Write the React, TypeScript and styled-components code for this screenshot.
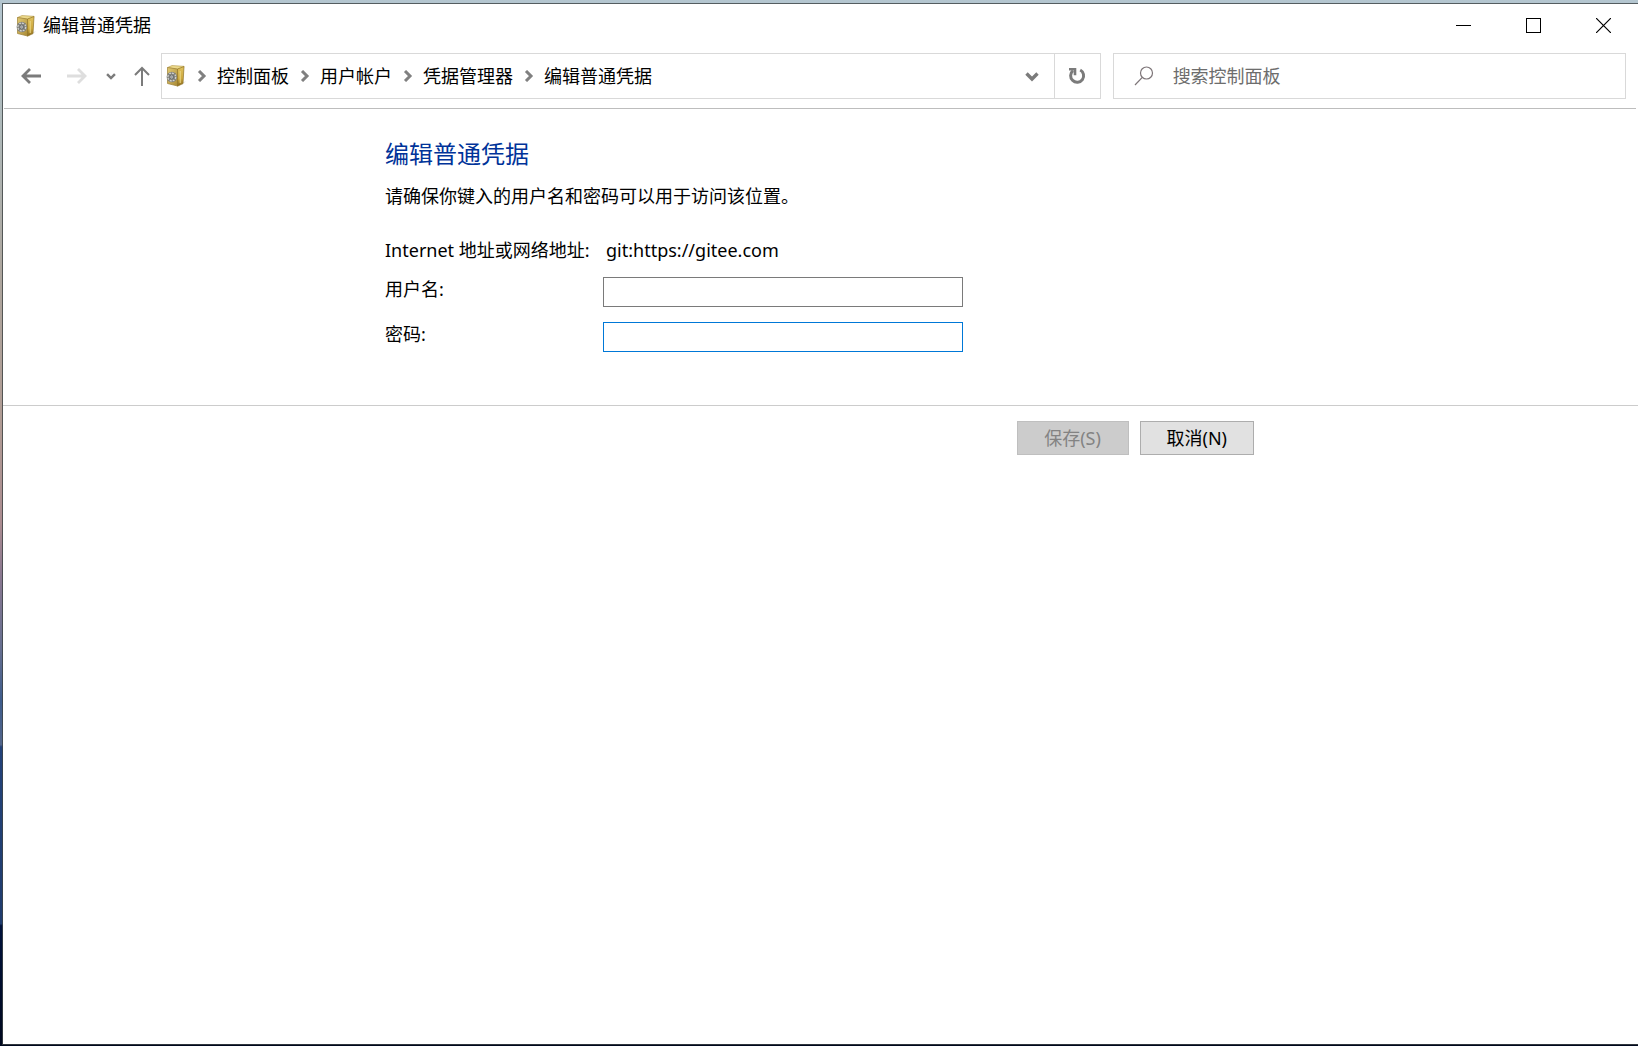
import React, { useState } from "react";
import styled, { createGlobalStyle } from "styled-components";

const GlobalStyle = createGlobalStyle`
  * {
    box-sizing: border-box;
  }
  html, body {
    margin: 0;
  }
  body, button, input {
    font-family: "Noto Sans", "Noto Sans CJK SC", sans-serif;
    font-size: 18px;
    line-height: 26px;
    color: #000;
  }
`;

const Desktop = styled.div`
  display: flex;
  min-height: 100vh;
  padding: 3px 0 1px 2px;
  background: linear-gradient(
    #b4c6d0 0%,
    #aeb9ba 12%,
    #ada69e 26%,
    #b09c94 40%,
    #ab8c90 50%,
    #8a7890 55%,
    #666f90 62%,
    #3e5c8c 67%,
    #52658a 71.2%,
    #23427a 71.4%,
    #1f3c6e 88.3%,
    #00123c 88.5%,
    #00081e 100%
  );
`;

const Window = styled.div`
  flex: 1;
  min-width: 0;
  display: flex;
  flex-direction: column;
  background: #fff;
  background-clip: padding-box;
  border: solid rgba(60, 66, 68, 0.8);
  border-width: 1px 0 1px 1px;
`;

const TitleBar = styled.header`
  display: flex;
  align-items: center;
  height: 43px;
  padding-left: 13px;
`;

const Title = styled.span`
  flex: 1;
  margin-left: 7px;
  line-height: 24px;
  padding-bottom: 2px;
`;

const PlainButton = styled.button<{ $width: number }>`
  display: flex;
  align-items: center;
  justify-content: center;
  flex: none;
  width: ${(p) => p.$width}px;
  align-self: stretch;
  padding: 0;
  border: 0;
  background: transparent;
  color: #7b7b7b;
`;

const CaptionButton = styled(PlainButton)`
  color: #000;
`;

const NavBar = styled.nav`
  display: flex;
  height: 62px;
  margin: 0 2px 0 1px;
  padding: 6px 10px 9px 4px;
  border-bottom: 1px solid #bdbdbd;
`;

const AddressBar = styled.div`
  flex: 19 1 0;
  min-width: 0;
  display: flex;
  align-items: center;
  padding-left: 4px;
  border: 1px solid #d9d9d9;
`;

const Crumbs = styled.ol`
  flex: 1;
  display: flex;
  align-items: center;
  margin: 0;
  padding: 0;
  list-style: none;
  white-space: nowrap;
`;

const Crumb = styled.li`
  display: flex;
  align-items: center;
`;

const CrumbLink = styled.a`
  color: #000;
  text-decoration: none;
`;

const Separator = styled.span`
  display: flex;
  justify-content: center;
  width: 31px;
`;

const RefreshButton = styled(PlainButton)`
  border-left: 1px solid #d9d9d9;
`;

const SearchBox = styled.label`
  flex: 10 1 0;
  min-width: 0;
  display: flex;
  align-items: center;
  gap: 19px;
  margin-left: 12px;
  padding-left: 20px;
  border: 1px solid #d9d9d9;
`;

const SearchInput = styled.input`
  flex: 1;
  min-width: 0;
  padding: 0;
  border: 0;
  outline: 0;
  background: transparent;
  &::placeholder {
    color: #6d6d6d;
    opacity: 1;
  }
`;

const Column = styled.div`
  width: 100%;
  max-width: 869px;
  margin: 0 auto;
`;

const Section = styled.div`
  padding: 29px 2px 53px 0;
`;

const Heading = styled.h1`
  margin: 0;
  font-size: 24px;
  line-height: 32px;
  font-weight: 400;
  color: #003399;
`;

const Hint = styled.p`
  margin: 13px 0 29px;
`;

const Fields = styled.div`
  display: grid;
  grid-template-columns: 218px 360px;
  row-gap: 15px;
  line-height: 24px;
`;

const FieldLabel = styled.label`
  white-space: nowrap;
`;

const Target = styled.output`
  padding-left: 3px;
`;

const TextField = styled.input`
  height: 30px;
  padding: 0 4px;
  border: 1px solid #7a7a7a;
  border-radius: 0;
  outline: 0;
  background: #fff;
  &[type="password"] {
    border-color: #0078d7;
  }
`;

const Footer = styled.footer`
  padding: 15px 2px 15px 0;
  border-top: 1px solid #cccccc;
`;

const Actions = styled(Column)`
  display: flex;
  justify-content: flex-end;
  gap: 11px;
`;

const ActionButton = styled.button`
  height: 34px;
  min-width: 112px;
  padding: 0 26px;
  border: 1px solid #adadad;
  background: #e1e1e1;
  line-height: 30px;
  white-space: nowrap;
  &:disabled {
    border-color: #bfbfbf;
    background: #cccccc;
    color: #838383;
  }
`;

const SafeIcon = () => (
  <svg width="20" height="22" viewBox="0 0 20 22" aria-hidden="true">
    <defs>
      <linearGradient id="safeFront" x1="0" y1="0" x2="1" y2="1">
        <stop offset="0" stopColor="#e2ca74" />
        <stop offset="1" stopColor="#a98a35" />
      </linearGradient>
      <linearGradient id="safeSide" x1="0" y1="0" x2="0" y2="1">
        <stop offset="0" stopColor="#e0c25e" />
        <stop offset="0.6" stopColor="#cda93f" />
        <stop offset="1" stopColor="#8a6a1c" />
      </linearGradient>
    </defs>
    <path d="M16 18l4-2-4 4z" fill="#ddd" />
    <path d="M1.500 2.500L6 .5l12 .8-.5 1.700-6 1.500z" fill="#ecd98c" stroke="#a88a34" strokeWidth=".5" />
    <path d="M1.500 2.500L11.500 4v17L1.500 18.500z" fill="url(#safeFront)" stroke="#9c8034" strokeWidth=".7" />
    <path d="M11.500 4L18 1.500 17 18.500l-5.500 2.700z" fill="url(#safeSide)" stroke="#8f7226" strokeWidth=".7" />
    <path d="M14.200 6v12" stroke="#ecd98a" strokeWidth="1" />
    <circle cx="5.800" cy="12" r="5.200" fill="#85857f" />
    <circle cx="5.800" cy="12" r="3.900" fill="none" stroke="#d2d2ce" strokeWidth="1.200" strokeDasharray="2 1" />
    <circle cx="5.800" cy="12" r="1.900" fill="#ecece9" stroke="#5c5f62" strokeWidth=".8" />
    <path d="M2.300 8.500l7 7M9.300 8.500l-7 7" stroke="#62666a" strokeWidth=".6" />
  </svg>
);

const BackIcon = () => (
  <svg width="20" height="16" viewBox="0 0 20 16" fill="none" stroke="currentColor" strokeWidth="2.800">
    <path d="M20 8H2M9 1L2 8l7 7" />
  </svg>
);

const ForwardIcon = () => (
  <svg width="20" height="16" viewBox="0 0 20 16" fill="none" stroke="#dedede" strokeWidth="2.800">
    <path d="M0 8h18M11 1l7 7-7 7" />
  </svg>
);

const UpIcon = () => (
  <svg width="16" height="20" viewBox="0 0 16 20" fill="none" stroke="currentColor" strokeWidth="2">
    <path d="M8 20V2M1 9l7-7 7 7" />
  </svg>
);

const DownIcon = ({ size }: { size: number }) => (
  <svg width={size} height={size} viewBox="0 0 14 14" fill="none" stroke="currentColor" strokeWidth="3.400">
    <path d="M1.500 4.500L7 10l5.500-5.500" />
  </svg>
);

const CrumbIcon = () => (
  <svg width="10" height="12" viewBox="0 0 10 12" fill="none" stroke="#808080" strokeWidth="3">
    <path d="M2 1l5 5-5 5" />
  </svg>
);

const RefreshIcon = () => (
  <svg width="18" height="18" viewBox="0 0 18 18" fill="none" stroke="currentColor" strokeWidth="3">
    <path d="M12.200 3A6.500 6.500 0 1 1 5 3.700" />
    <path d="M1 2.200h6v6" strokeWidth="2.600" />
  </svg>
);

const SearchIcon = () => (
  <svg width="20" height="20" viewBox="0 0 20 20" fill="none" stroke="#7d7578" strokeWidth="1.200">
    <circle cx="12.500" cy="7" r="6" />
    <path d="M8.300 11.300L1 19" />
  </svg>
);

const MinimizeIcon = () => (
  <svg width="15" height="15" viewBox="0 0 15 15" shapeRendering="crispEdges">
    <path d="M0 7h15v1H0z" />
  </svg>
);

const MaximizeIcon = () => (
  <svg width="15" height="15" viewBox="0 0 15 15" fill="none" stroke="#000" shapeRendering="crispEdges">
    <rect x=".5" y=".5" width="14" height="14" />
  </svg>
);

const CloseIcon = () => (
  <svg width="15" height="15" viewBox="0 0 15 15" fill="none" stroke="#000" strokeWidth="1.200">
    <path d="M0 0l15 15M15 0L0 15" />
  </svg>
);

const crumbs = ["控制面板", "用户帐户", "凭据管理器", "编辑普通凭据"];

export default function App() {
  const [user, setUser] = useState("");
  const [password, setPassword] = useState("");

  return (
    <>
      <GlobalStyle />
      <Desktop>
        <Window>
          <TitleBar>
            <SafeIcon />
            <Title>编辑普通凭据</Title>
            <CaptionButton $width={70} aria-label="最小化"><MinimizeIcon /></CaptionButton>
            <CaptionButton $width={70} aria-label="最大化"><MaximizeIcon /></CaptionButton>
            <CaptionButton $width={70} aria-label="关闭"><CloseIcon /></CaptionButton>
          </TitleBar>

          <NavBar>
            <PlainButton $width={46} aria-label="后退"><BackIcon /></PlainButton>
            <PlainButton $width={46} aria-label="前进" disabled><ForwardIcon /></PlainButton>
            <PlainButton $width={22} aria-label="最近浏览的位置"><DownIcon size={10} /></PlainButton>
            <PlainButton $width={39} aria-label="上移"><UpIcon /></PlainButton>
            <AddressBar>
              <SafeIcon />
              <Crumbs>
                {crumbs.map((name) => (
                  <Crumb key={name}>
                    <Separator><CrumbIcon /></Separator>
                    <CrumbLink href="#">{name}</CrumbLink>
                  </Crumb>
                ))}
              </Crumbs>
              <PlainButton $width={44} aria-label="以前的位置"><DownIcon size={14} /></PlainButton>
              <RefreshButton $width={46} aria-label="刷新"><RefreshIcon /></RefreshButton>
            </AddressBar>
            <SearchBox>
              <SearchIcon />
              <SearchInput type="text" placeholder="搜索控制面板" aria-label="搜索控制面板" />
            </SearchBox>
          </NavBar>

          <form onSubmit={(e) => e.preventDefault()}>
            <Section>
              <Column>
                <Heading>编辑普通凭据</Heading>
                <Hint>请确保你键入的用户名和密码可以用于访问该位置。</Hint>
                <Fields>
                  <FieldLabel htmlFor="target">Internet 地址或网络地址:</FieldLabel>
                  <Target id="target">git:https://gitee.com</Target>
                  <FieldLabel htmlFor="user">用户名:</FieldLabel>
                  <TextField id="user" type="text" value={user} onChange={(e) => setUser(e.target.value)} />
                  <FieldLabel htmlFor="password">密码:</FieldLabel>
                  <TextField
                    id="password"
                    type="password"
                    value={password}
                    onChange={(e) => setPassword(e.target.value)}
                  />
                </Fields>
              </Column>
            </Section>
            <Footer>
              <Actions>
                <ActionButton type="submit" disabled={!password}>保存(S)</ActionButton>
                <ActionButton type="button">取消(N)</ActionButton>
              </Actions>
            </Footer>
          </form>
        </Window>
      </Desktop>
    </>
  );
}
